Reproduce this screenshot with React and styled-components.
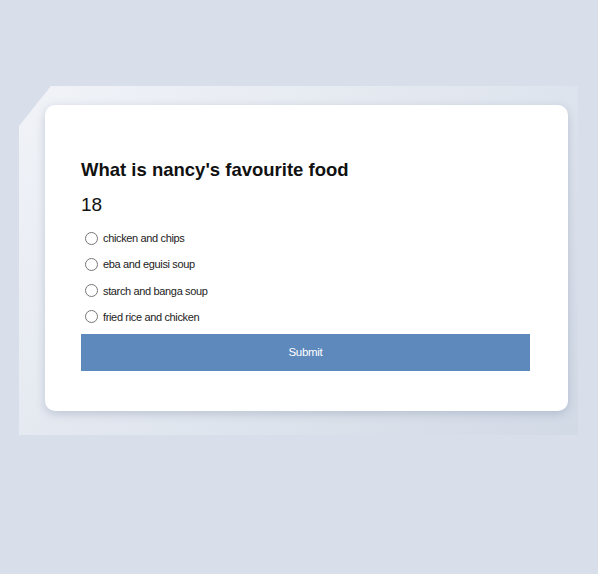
import React from "react";
import styled, { createGlobalStyle } from "styled-components";

const Global = createGlobalStyle`
  html, body { margin: 0; padding: 0; }
  body {
    background: #d9dfea;
    font-family: "Liberation Sans", Arial, sans-serif;
    width: 598px;
    height: 574px;
    overflow: hidden;
  }
`;

const Stage = styled.div`
  padding: 86px 20px 0 19px;
`;

const Panel = styled.div`
  width: 559px;
  box-sizing: border-box;
  padding: 19px 10px 24px 26px;
  background: linear-gradient(135deg, #f1f3f8 0%, #e3e8f0 45%, #d2dae6 100%);
  clip-path: polygon(32px 0, 100% 0, 100% 100%, 0 100%, 0 40px);
`;

const Card = styled.div`
  background: #ffffff;
  border-radius: 10px;
  box-shadow: 0 3px 10px rgba(120, 135, 160, 0.35);
  padding: 54px 38px 40px 36px;
  box-sizing: border-box;
  height: 306px;
`;

const Question = styled.h2`
  margin: 0;
  font-size: 18.5px;
  font-weight: 700;
  color: #111;
  line-height: 22px;
`;

const Count = styled.div`
  margin-top: 12px;
  font-size: 19px;
  color: #111;
  line-height: 24px;
`;

const Options = styled.div`
  margin-top: 11px;
  display: flex;
  flex-direction: column;
  gap: 6.33px;
`;

const Option = styled.label`
  display: flex;
  align-items: center;
  height: 20px;
  font-size: 11px;
  color: #222;
  letter-spacing: -0.35px;
`;

const Radio = styled.input`
  margin: 0 5px 0 4px;
  width: 13px;
  height: 13px;
`;

const Submit = styled.button`
  margin-top: 7px;
  width: 100%;
  height: 37px;
  border: none;
  background: #5e89bd;
  color: #fff;
  font-family: "Liberation Sans", Arial, sans-serif;
  font-size: 11.5px;
  letter-spacing: -0.3px;
`;

const options = [
  "chicken and chips",
  "eba and eguisi soup",
  "starch and banga soup",
  "fried rice and chicken",
];

export default function App() {
  return (
    <>
      <Global />
      <Stage>
        <Panel>
          <Card>
            <Question>What is nancy's favourite food</Question>
            <Count>18</Count>
            <Options>
              {options.map((o) => (
                <Option key={o}>
                  <Radio type="radio" name="food" />
                  {o}
                </Option>
              ))}
            </Options>
            <Submit>Submit</Submit>
          </Card>
        </Panel>
      </Stage>
    </>
  );
}
